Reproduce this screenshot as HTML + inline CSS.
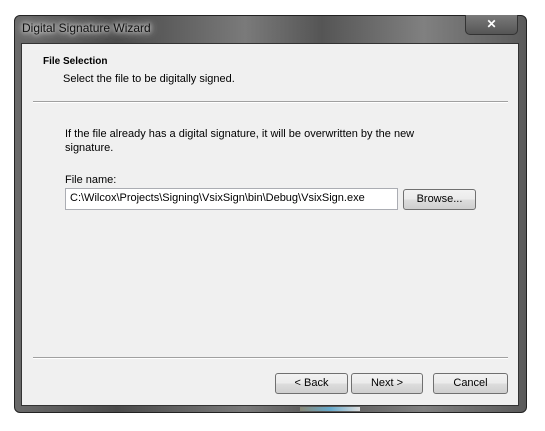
<!DOCTYPE html>
<html><head><style>
*{margin:0;padding:0;box-sizing:border-box}
body{width:545px;height:431px;background:#fff;position:relative;font-family:"Liberation Sans",sans-serif;font-size:11px;color:#000;overflow:hidden}
.win{position:absolute;left:14px;top:15px;width:513px;height:398px;border:1px solid #222;border-radius:6px;background:linear-gradient(90deg,#6a6a6a 0%,#4a4a4a 20%,#7a7a7a 45%,#555 60%,#808080 80%,#5a5a5a 100%)}
.title{position:absolute;left:22px;top:21px;font-size:12px;color:#111;text-shadow:0 0 8px #ddd,0 0 4px #eee,0 0 12px #ccc}
.close{position:absolute;left:465px;top:15px;width:53px;height:20px;border:1px solid #333;border-top:none;border-radius:0 0 5px 5px;background:linear-gradient(#7a7a7a,#555);color:#fff;font-weight:bold;font-size:12px;text-align:center;line-height:18px}
.client{position:absolute;left:21px;top:43px;width:498px;height:363px;background:#f0f0f0;border:1px solid #333}
.t{position:absolute;white-space:nowrap}
.sep{position:absolute;left:33px;width:475px;height:2px;border-top:1px solid #a0a0a0;border-bottom:1px solid #fff}
.btn{position:absolute;height:21px;border:1px solid #707070;border-radius:3px;background:linear-gradient(#f2f2f2 0%,#ebebeb 50%,#dddddd 51%,#cfcfcf 100%);text-align:center;line-height:19px;font-size:11px}
.bar{position:absolute;left:300px;top:407px;width:60px;height:4px;background:linear-gradient(90deg,#887,#6ac,#ddd)}
</style></head><body>
<div class="win"></div>
<div class="title">Digital Signature Wizard</div>
<div class="close">✕</div>
<div class="client"></div>
<div class="t" style="left:43px;top:56px;font-weight:bold;font-size:10px">File Selection</div>
<div class="t" style="left:63px;top:73px">Select the file to be digitally signed.</div>
<div class="sep" style="top:101px"></div>
<div class="t" style="left:65px;top:128px">If the file already has a digital signature, it will be overwritten by the new</div>
<div class="t" style="left:65px;top:142px">signature.</div>
<div class="t" style="left:65px;top:174px">File name:</div>
<div style="position:absolute;left:65px;top:188px;width:333px;height:22px;background:#fff;border:1px solid #abadb3"></div>
<div class="t" style="left:70px;top:192px">C:\Wilcox\Projects\Signing\VsixSign\bin\Debug\VsixSign.exe</div>
<div class="btn" style="left:403px;top:189px;width:73px">Browse...</div>
<div class="sep" style="top:357px"></div>
<div class="btn" style="left:275px;top:373px;width:73px">&lt; Back</div>
<div class="btn" style="left:351px;top:373px;width:72px">Next &gt;</div>
<div class="btn" style="left:433px;top:373px;width:75px">Cancel</div>
<div class="bar"></div>
</body></html>
